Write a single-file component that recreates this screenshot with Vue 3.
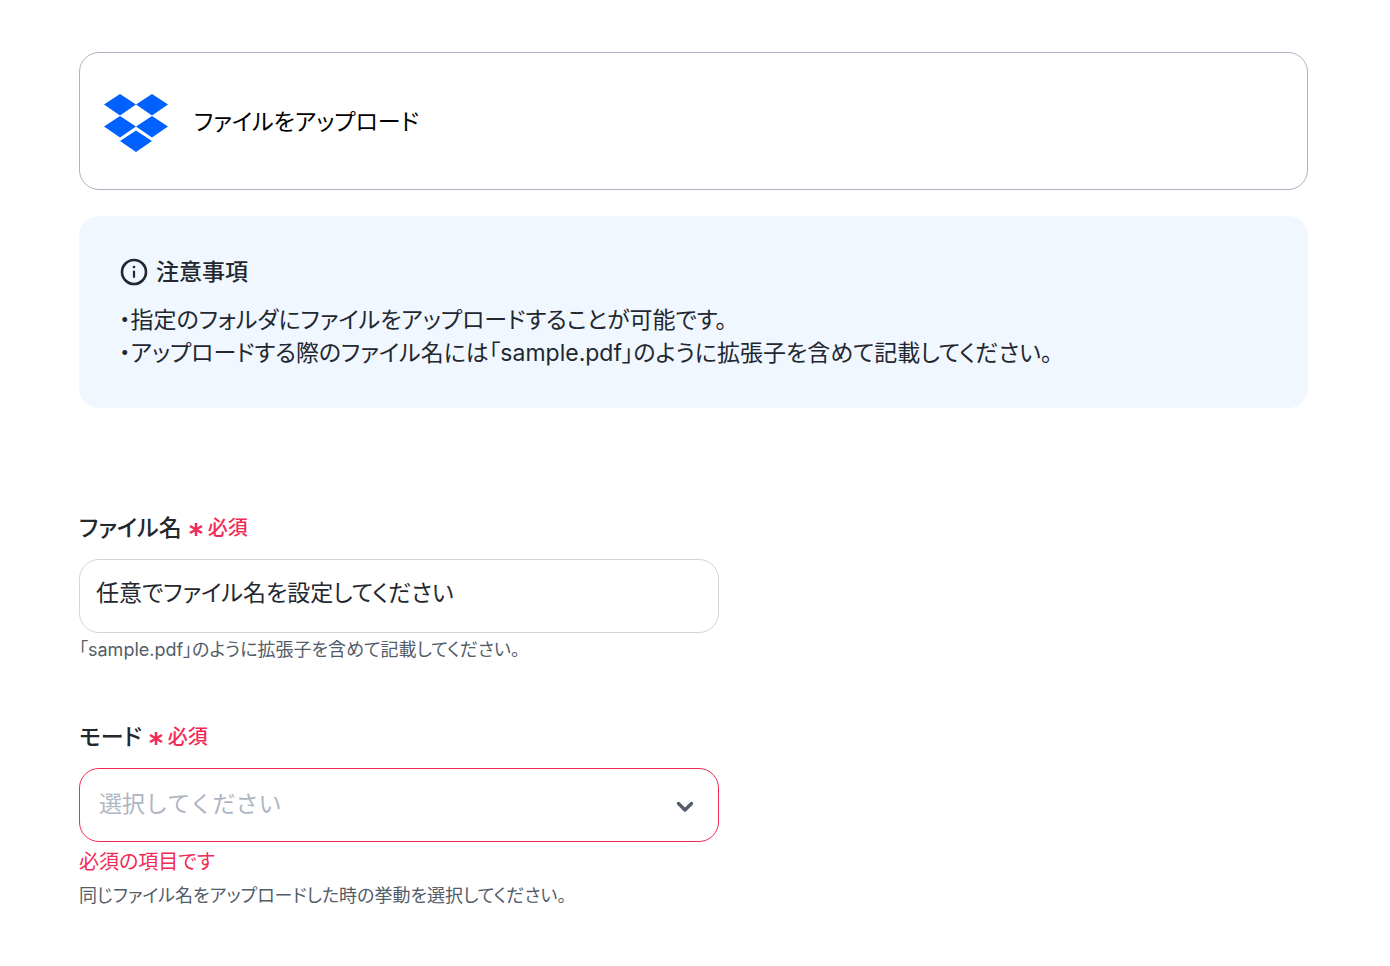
<script setup>
import { ref } from 'vue'

const fileName = ref('任意でファイル名を設定してください')
const mode = ref('')
const modes = ['上書き', '自動リネーム']
</script>

<template>
  <main class="page">
    <header class="service">
      <svg class="service-logo" viewBox="0 0 64 64" aria-hidden="true">
        <path d="M16 5 32 15.500 16 26.500 0 15.500ZM48 5 64 15.500 48 26.500 32 15.500ZM16 27 32 37.500 16 48.500 0 37.500ZM48 27 64 37.500 48 48.500 32 37.500ZM32 41.500 48 52 32 63 16 52Z" fill="#0061ff" />
      </svg>
      <h1 class="service-title">ファイルをアップロード</h1>
    </header>

    <section class="notice">
      <h2 class="notice-title">
        <svg class="notice-icon" viewBox="0 0 30 30" fill="none" aria-hidden="true">
          <circle cx="15" cy="14" r="12" stroke="currentColor" stroke-width="2.600" />
          <path d="M15 12.700v7" stroke="currentColor" stroke-width="2.200" />
          <circle cx="15" cy="9" r="1.300" fill="currentColor" />
        </svg>
        注意事項
      </h2>
      <p>・指定のフォルダにファイルをアップロードすることが可能です。</p>
      <p>・アップロードする際のファイル名には「sample.pdf」のように拡張子を含めて記載してください。</p>
    </section>

    <form class="form" @submit.prevent>
      <div class="field">
        <label class="label" for="file-name">
          ファイル名
          <span class="required">
            <svg class="asterisk" viewBox="0 0 16 16" aria-hidden="true">
              <path d="M8 2v13M2 5l12 7M14 5 2 12" />
            </svg>
            必須
          </span>
        </label>
        <input id="file-name" v-model="fileName" class="control" type="text" aria-describedby="file-name-hint" />
        <p id="file-name-hint" class="hint">「sample.pdf」のように拡張子を含めて記載してください。</p>
      </div>

      <div class="field">
        <label class="label" for="mode">
          モード
          <span class="required">
            <svg class="asterisk" viewBox="0 0 16 16" aria-hidden="true">
              <path d="M8 2v13M2 5l12 7M14 5 2 12" />
            </svg>
            必須
          </span>
        </label>
        <div class="select-wrap">
          <select id="mode" v-model="mode" class="control select" aria-invalid="true" aria-describedby="mode-error mode-hint">
            <option value="" disabled>選択してください</option>
            <option v-for="item in modes" :key="item" :value="item">{{ item }}</option>
          </select>
          <svg class="chevron" viewBox="0 0 20 12" aria-hidden="true">
            <path d="M3.500 2.500 10 9l6.500-6.500" />
          </svg>
        </div>
        <p id="mode-error" class="error">必須の項目です</p>
        <p id="mode-hint" class="hint">同じファイル名をアップロードした時の挙動を選択してください。</p>
      </div>
    </form>
  </main>
</template>

<style>
body {
  background: #fff;
}
</style>

<style scoped>
.page {
  box-sizing: border-box;
  padding: 52px 82px 52px 79px;
  color: #23272f;
  font-family: Inter, "Noto Sans CJK JP", sans-serif;
  font-size: 23px;
  line-height: 33px;
  font-feature-settings: "palt";
}

h1,
h2,
p {
  margin: 0;
}

.service {
  display: flex;
  align-items: center;
  gap: 26px;
  box-sizing: border-box;
  min-height: 138px;
  padding: 24px;
  border: 1px solid #abb4c0;
  border-radius: 20px;
}

.service-logo {
  width: 64px;
  height: 64px;
  flex: none;
}

.service-title {
  padding-top: 2px;
  color: #000;
  font-size: 23px;
  font-weight: 400;
}

.notice {
  margin-top: 26px;
  padding: 40px 40px 38px;
  border-radius: 20px;
  background: #f0f7ff;
}

.notice-title {
  display: flex;
  align-items: center;
  gap: 7px;
  margin-bottom: 15px;
  font-size: 23px;
  font-weight: 500;
}

.notice-icon {
  width: 30px;
  height: 30px;
  flex: none;
}

.form {
  display: grid;
  gap: 55px;
  max-width: 640px;
  margin-top: 104px;
}

.field {
  display: flex;
  flex-direction: column;
}

.label {
  display: flex;
  align-items: center;
  gap: 6px;
  margin-bottom: 14px;
  font-weight: 500;
}

.required {
  display: flex;
  align-items: center;
  gap: 4px;
  color: #f12b55;
  font-size: 20px;
}

.asterisk {
  width: 16px;
  height: 16px;
  fill: none;
  stroke: currentColor;
  stroke-width: 2.5;
}

.control {
  box-sizing: border-box;
  width: 100%;
  height: 74px;
  padding: 0 16px 10px;
  border: 1px solid #d0d6de;
  border-radius: 20px;
  background: #fff;
  color: inherit;
  font: inherit;
  font-feature-settings: inherit;
}

.select-wrap {
  display: grid;
  align-items: center;
}

.select-wrap > * {
  grid-area: 1 / 1;
}

.select {
  appearance: none;
  padding: 0 56px 2px 19px;
  border-color: #f12b55;
  color: #adb6c2;
  font-feature-settings: normal;
}

.chevron {
  width: 20px;
  height: 12px;
  margin: 4px 24px 0 0;
  justify-self: end;
  fill: none;
  stroke: #535c69;
  stroke-width: 3.4;
  stroke-linecap: round;
  stroke-linejoin: round;
  pointer-events: none;
}

.hint {
  color: #535c69;
  font-size: 18px;
}

.error {
  margin-top: 4px;
  color: #f12b55;
  font-size: 20px;
}
</style>
